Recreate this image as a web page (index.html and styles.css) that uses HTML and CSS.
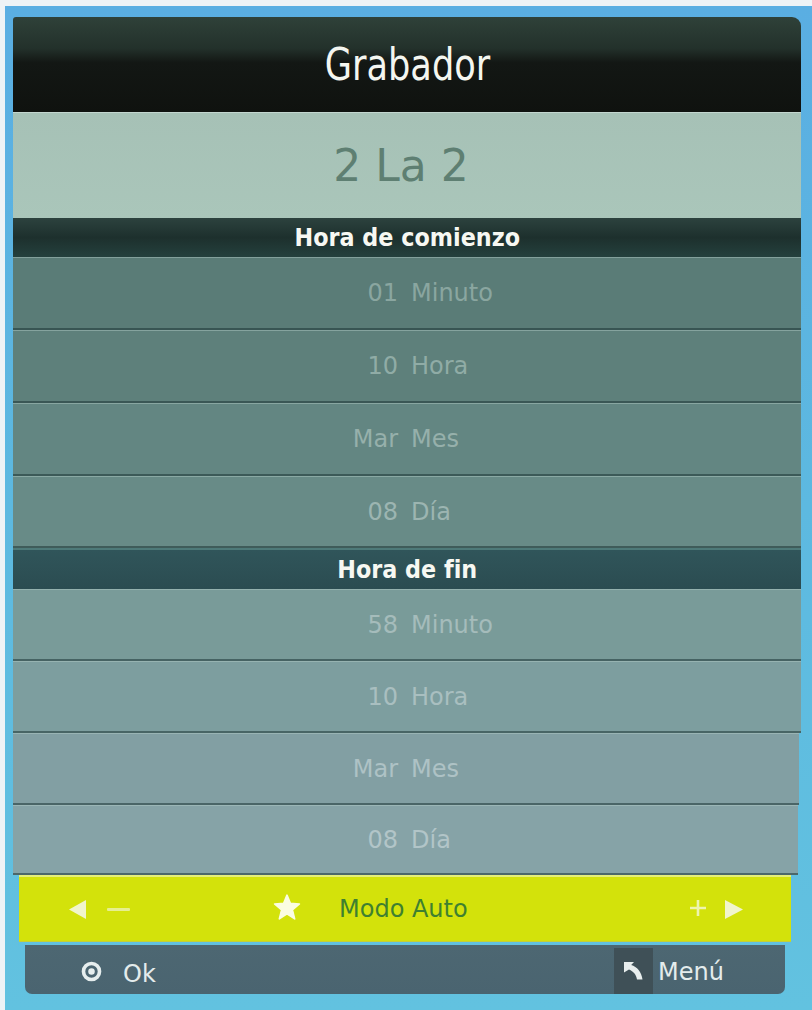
FILE: index.html
```html
<!DOCTYPE html>
<html lang="es">
<head>
<meta charset="utf-8">
<title>Grabador</title>
<link rel="stylesheet" href="styles.css">
</head>
<body>
<div class="frame">
  <div class="panel">
    <div class="title"><span class="title-text">Grabador</span></div>
    <div class="subtitle">2 La 2</div>
    <div class="section s1"><span class="section-text">Hora de comienzo</span></div>
    <div class="row r1"><span class="val">01</span><span class="lbl">Minuto</span></div>
    <div class="row r2"><span class="val">10</span><span class="lbl">Hora</span></div>
    <div class="row r3"><span class="val">Mar</span><span class="lbl">Mes</span></div>
    <div class="row r4"><span class="val">08</span><span class="lbl">Día</span></div>
    <div class="section s2"><span class="section-text">Hora de fin</span></div>
    <div class="row r5"><span class="val">58</span><span class="lbl">Minuto</span></div>
    <div class="row r6"><span class="val">10</span><span class="lbl">Hora</span></div>
    <div class="row r7"><span class="val">Mar</span><span class="lbl">Mes</span></div>
    <div class="row r8"><span class="val">08</span><span class="lbl">Día</span></div>
    <div class="mode">
      <div class="mode-left">
        <svg class="tri" width="19" height="21" viewBox="0 0 19 21"><path d="M18 1 L1 10.5 L18 20 Z" fill="#f1f5cc"/></svg>
        <span class="minus"></span>
      </div>
      <svg class="star" width="28" height="26" viewBox="0 0 24 23"><path d="M12 1 L15 8.3 L23 8.8 L16.8 14 L18.8 22 L12 17.6 L5.2 22 L7.2 14 L1 8.8 L9 8.3 Z" fill="#fbfde2" stroke="#fbfde2" stroke-width="1.4" stroke-linejoin="round"/></svg>
      <span class="mode-text">Modo Auto</span>
      <div class="mode-right">
        <svg class="plus" width="20" height="18" viewBox="0 0 20 18"><path d="M10 1 V17 M2 9 H18" stroke="#eef4b0" stroke-width="2.6" fill="none"/></svg>
        <svg class="tri" width="20" height="21" viewBox="0 0 20 21"><path d="M1 1 L19 10.5 L1 20 Z" fill="#f1f5cc"/></svg>
      </div>
    </div>
    <div class="footer">
      <div class="ok">
        <svg width="21" height="21" viewBox="0 0 22 22"><circle cx="11" cy="11" r="8.4" fill="none" stroke="#e6eeee" stroke-width="3.8"/><circle cx="11" cy="11" r="3.4" fill="#e6eeee"/></svg>
        <span class="ok-text">Ok</span>
      </div>
      <div class="menu">
        <span class="menu-icon"><svg width="24" height="22" viewBox="0 0 24 22"><path d="M2 2 L12 2 L9.2 5 C15 7 19.5 11.5 20.5 19.5 L15 19.5 C14 14.5 11.5 11.5 7 9.6 L2 12.5 Z" fill="#e8eeee"/></svg></span>
        <span class="menu-text">Menú</span>
      </div>
    </div>
  </div>
</div>
</body>
</html>
```
FILE: styles.css
```css
html, body {
  margin: 0;
  padding: 0;
  background: #eef3f6;
}

body {
  font-family: "DejaVu Sans", "Liberation Sans", sans-serif;
  width: 812px;
  height: 1010px;
  overflow: hidden;
}

.frame {
  margin: 6px 0 0 5px;
  height: 1004px;
  background: linear-gradient(180deg, #5aaee2 0%, #5db9e0 50%, #62c2e0 100%);
  padding: 11px 10px 0 8px;
  box-sizing: border-box;
}

.panel {
  width: 788px;
  display: flex;
  flex-direction: column;
}

.title {
  height: 95px;
  border-radius: 3px 9px 0 0;
  background: linear-gradient(180deg, #2f4139 0%, #23312b 33%, #131714 48%, #0f120f 100%);
  color: #f4f6f0;
  font-size: 44px;
  display: flex;
  align-items: center;
  justify-content: center;
}

.title-text {
  display: inline-block;
  transform: scaleX(0.8);
}

.subtitle {
  height: 106px;
  background: linear-gradient(180deg, #a6c1b6 0%, #aac6ba 100%);
  color: #5e7f72;
  font-size: 44px;
  display: flex;
  align-items: center;
  justify-content: center;
  padding-right: 12px;
  border-top: 1px solid #c3d6cf;
  box-sizing: border-box;
}

.section {
  color: #f7f8f2;
  font-weight: bold;
  font-size: 24px;
  display: flex;
  align-items: center;
  justify-content: center;
  box-sizing: border-box;
}

.section-text {
  display: inline-block;
  transform: scaleX(0.93);
}

.s1 {
  height: 39px;
  background: linear-gradient(180deg, #2c423e 0%, #1d302d 50%, #24403d 100%);
}

.s2 {
  height: 41px;
  background: linear-gradient(180deg, #30555a 0%, #2b4c51 100%);
  border-top: 2px solid #4e7a79;
}

.row {
  height: 73px;
  display: grid;
  grid-template-columns: 385px 1fr;
  column-gap: 13px;
  align-items: center;
  font-size: 24px;
  box-sizing: border-box;
  border-top: 1px solid rgba(180, 205, 200, 0.45);
  border-bottom: 2px solid rgba(30, 55, 55, 0.55);
}

.val {
  text-align: right;
}

.lbl {
  text-align: left;
}

.r1 { background: #5a7c77; color: #8aa6a0; }
.r2 { background: #5e807b; color: #90aca6; }
.r3 { background: #638682; color: #96b0ab; }
.r4 { background: #688b87; color: #9cb5b1; height: 72px; }
.r5 { background: #799b99; color: #a5bcbb; height: 72px; }
.r6 { background: #7d9e9f; color: #a9bfc0; height: 72px; }
.r7 { background: #829fa3; color: #aec2c5; height: 72px; margin-right: 2px; }
.r8 { background: #86a3a7; color: #b2c5c8; height: 70px; margin-right: 3px; }

.mode {
  height: 67px;
  margin: 0 10px 0 6px;
  background: #d3e20b;
  border-top: 2px solid #e6ee7a;
  border-bottom: 1px solid #c4cf3a;
  display: flex;
  align-items: center;
  padding: 0 47px 0 49px;
  box-sizing: border-box;
}

.mode-left,
.mode-right {
  display: flex;
  align-items: center;
}

.mode-left {
  gap: 20px;
}

.mode-right {
  gap: 16px;
  margin-left: auto;
}

.minus {
  width: 23px;
  height: 3px;
  background: #e6ef90;
  border-radius: 1px;
}

.star {
  margin-left: 143px;
  margin-top: -4px;
}

.mode-text {
  margin-left: 38px;
  color: #3e8030;
  font-size: 24px;
}

.plus {
  margin-top: -2px;
}

.footer {
  margin: 3px 16px 0 12px;
  height: 49px;
  background: linear-gradient(180deg, #4d6772 0%, #4a6470 100%);
  border-radius: 0 0 7px 7px;
  display: flex;
  align-items: center;
  justify-content: space-between;
  padding: 0 61px 0 56px;
  box-sizing: border-box;
  color: #e4ecec;
  font-size: 24px;
}

.ok,
.menu {
  display: flex;
  align-items: center;
}

.ok {
  gap: 21px;
}

.ok svg {
  margin-top: 4px;
}

.ok-text {
  margin-top: 8px;
}

.menu {
  gap: 5px;
}

.menu-text {
  margin-top: 5px;
}

.menu-icon {
  width: 39px;
  height: 46px;
  background: #3f5057;
  display: flex;
  align-items: center;
  justify-content: center;
  margin-top: 2px;
}
```
